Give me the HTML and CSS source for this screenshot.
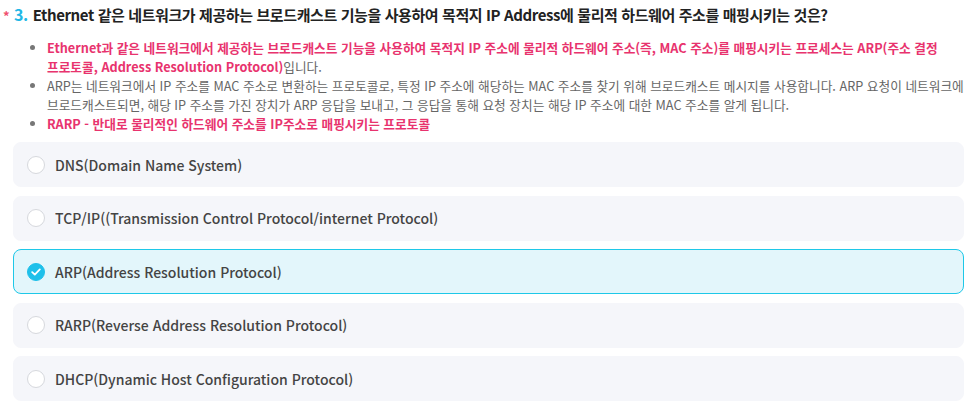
FILE: index.html
```html
<!DOCTYPE html>
<html lang="ko">
<head>
    <meta charset="UTF-8">
    <title>문제 3</title>
    <link rel="stylesheet" href="styles.css">
</head>
<body>
    <section class="question">
        <h2 class="question-title">
            <span class="required">*</span>
            <span class="number">3.</span>
            Ethernet 같은 네트워크가 제공하는 브로드캐스트 기능을 사용하여 목적지 IP Address에 물리적 하드웨어 주소를 매핑시키는 것은?
        </h2>
        <ul class="hints">
            <li class="hint-strong">Ethernet과 같은 네트워크에서 제공하는 브로드캐스트 기능을 사용하여 목적지 IP 주소에 물리적 하드웨어 주소(즉, MAC 주소)를 매핑시키는 프로세스는 ARP(주소 결정 프로토콜, Address Resolution Protocol)<span class="plain">입니다.</span></li>
            <li>ARP는 네트워크에서 IP 주소를 MAC 주소로 변환하는 프로토콜로, 특정 IP 주소에 해당하는 MAC 주소를 찾기 위해 브로드캐스트 메시지를 사용합니다. ARP 요청이 네트워크에 브로드캐스트되면, 해당 IP 주소를 가진 장치가 ARP 응답을 보내고, 그 응답을 통해 요청 장치는 해당 IP 주소에 대한 MAC 주소를 알게 됩니다.</li>
            <li class="hint-strong">RARP - 반대로 물리적인 하드웨어 주소를 IP주소로 매핑시키는 프로토콜</li>
        </ul>
        <div class="options">
            <label class="option">
                <span class="radio"></span>
                DNS(Domain Name System)
            </label>
            <label class="option">
                <span class="radio"></span>
                TCP/IP((Transmission Control Protocol/internet Protocol)
            </label>
            <label class="option selected">
                <span class="radio checked">
                    <svg width="10" height="8" viewBox="0 0 10 8"><path d="M1.2 4.2 L3.8 6.6 L8.8 1.4" fill="none" stroke="#fff" stroke-width="1.8" stroke-linecap="round" stroke-linejoin="round"/></svg>
                </span>
                ARP(Address Resolution Protocol)
            </label>
            <label class="option">
                <span class="radio"></span>
                RARP(Reverse Address Resolution Protocol)
            </label>
            <label class="option">
                <span class="radio"></span>
                DHCP(Dynamic Host Configuration Protocol)
            </label>
        </div>
    </section>
</body>
</html>
```

FILE: styles.css
```css
body {
    font-family: "Noto Sans CJK KR", "Noto Sans", sans-serif;
    margin: 0;
    padding: 4px 10px 0 13px;
    background-color: #ffffff;
    color: #333;
}

.question-title {
    margin: 0 0 0 -10px;
    font-size: 15px;
    font-weight: 700;
    line-height: 20px;
    letter-spacing: -0.4px;
    color: #222;
}

.required {
    color: #f0506e;
    font-size: 13px;
    margin-right: 1px;
}

.number {
    color: #1fb7e6;
    font-size: 16px;
    margin-right: 1px;
}

.hints {
    margin: 12px 0 9px;
    padding-left: 34px;
    font-size: 12.7px;
    line-height: 19px;
    color: #666;
    word-break: keep-all;
}

.hints li {
    margin: 0;
}

.hints li::marker {
    color: #777;
}

.hint-strong {
    color: #e8336e;
    font-weight: 700;
}

.hint-strong .plain {
    color: #666;
    font-weight: 400;
}

.options {
    display: flex;
    flex-direction: column;
    gap: 8.5px;
}

.option {
    display: flex;
    align-items: center;
    gap: 10px;
    height: 45px;
    padding: 0 13px;
    background-color: #f5f6fa;
    border: 1px solid #f5f6fa;
    border-radius: 8px;
    box-sizing: border-box;
    font-size: 14px;
    font-weight: 500;
    color: #444;
}

.option.selected {
    background-color: #e3f6fb;
    border-color: #1ec8e8;
}

.radio {
    width: 18px;
    height: 18px;
    border-radius: 50%;
    border: 1px solid #d6d8dd;
    background-color: #fff;
    box-sizing: border-box;
    display: flex;
    align-items: center;
    justify-content: center;
    flex-shrink: 0;
}

.radio.checked {
    background-color: #1ec0ea;
    border-color: #1ec0ea;
}
```
